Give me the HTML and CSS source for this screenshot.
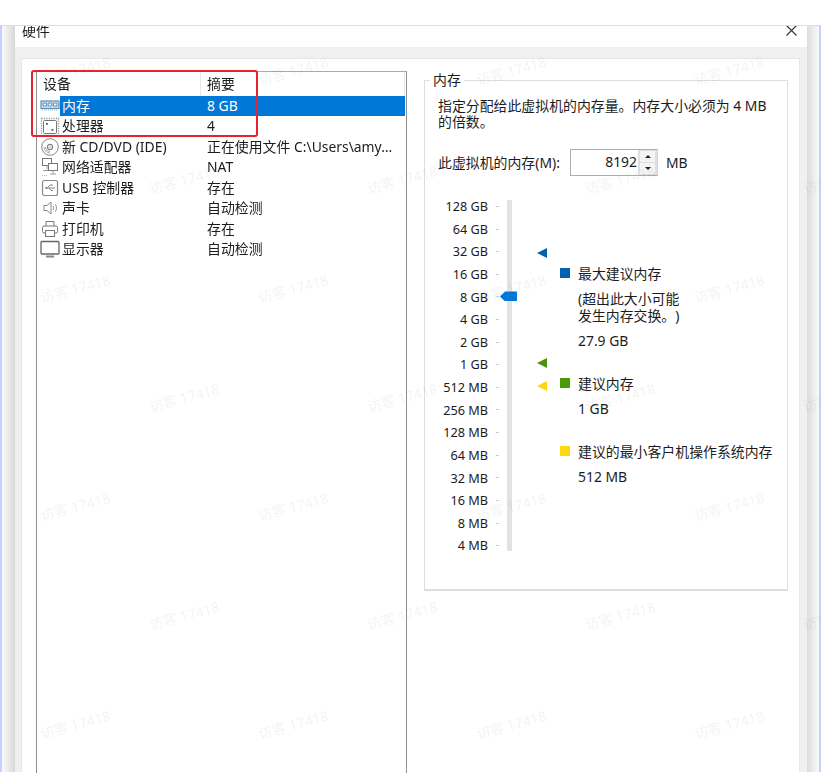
FILE: index.html
```html
<!DOCTYPE html>
<html lang="zh-CN">
<head>
<meta charset="utf-8">
<title>硬件</title>
<link rel="stylesheet" href="styles.css">
</head>
<body>
<div class="topbar"></div>
<div class="stage">
  <div class="edge edge-left"></div>
  <main class="window">
    <header class="titlebar">
      <span class="title">硬件</span>
      <svg class="close" viewBox="0 0 11 11" width="11" height="11"><path d="M.5.5l10 10M10.5.5l-10 10" stroke="#333" stroke-width="1.1" fill="none"/></svg>
    </header>
    <div class="band">
      <div class="panel">
        <section class="list">
          <div class="list-head">
            <div class="col-a">设备</div>
            <div class="col-b">摘要</div>
          </div>
          <div class="row sel">
            <svg class="ico" viewBox="0 0 20 20"><rect x="1" y="5" width="18" height="7.500" fill="#d3e3f0" stroke="#5d90b8" stroke-width="1.200"/><path d="M3 7h3.600v3H3zM8.200 7h3.600v3H8.200zM13.400 7h3.600v3h-3.600z" fill="#f6fbff" stroke="#4f86b0" stroke-width=".9"/><path d="M2 14h16" stroke="#8fb2cc" stroke-width="1.200" stroke-dasharray="1 1"/></svg>
            <div class="name">内存</div><div class="sum">8 GB</div>
          </div>
          <div class="row">
            <svg class="ico" viewBox="0 0 20 20"><rect x="1.500" y="1.500" width="17" height="17" fill="none" stroke="#999" stroke-width="1.400" stroke-dasharray="1.200 1.200"/><rect x="3.500" y="3.500" width="13" height="13" rx="1" fill="#fff" stroke="#777"/><rect x="6" y="6" width="1.800" height="1.800" fill="#555"/><rect x="11.500" y="12" width="1.800" height="1.800" fill="#555"/></svg>
            <div class="name">处理器</div><div class="sum">4</div>
          </div>
          <div class="row">
            <svg class="ico" viewBox="0 0 20 20"><circle cx="10" cy="10" r="8.300" fill="#fff" stroke="#888"/><circle cx="10" cy="10" r="2.800" fill="#ddd" stroke="#777"/><path d="M5.500 10a4.500 4.500 0 0 0 4.500 4.500M4 10a6 6 0 0 0 6 6" stroke="#aaa" fill="none"/></svg>
            <div class="name">新 CD/DVD (IDE)</div><div class="sum">正在使用文件 C:\Users\amy…</div>
          </div>
          <div class="row">
            <svg class="ico" viewBox="0 0 20 20"><rect x="2.500" y="1.500" width="9" height="7" fill="#fff" stroke="#777"/><rect x="8.500" y="6.500" width="9" height="7" fill="#fff" stroke="#777"/><path d="M7 8.500v4M3 13.500h5M13 13.500v3M10 17h6" stroke="#999" fill="none"/><path d="M2 18.500h6" stroke="#bbb" stroke-dasharray="1 1"/></svg>
            <div class="name">网络适配器</div><div class="sum">NAT</div>
          </div>
          <div class="row">
            <svg class="ico" viewBox="0 0 20 20"><rect x="2.500" y="2.500" width="15" height="15" rx="2" fill="#fff" stroke="#888" stroke-width="1.200"/><path d="M5 10h10M7 10l3-3h3M9 10l2 2.500h2" stroke="#888" fill="none"/><path d="M5 10l2-1.200v2.400z" fill="#888"/></svg>
            <div class="name">USB 控制器</div><div class="sum">存在</div>
          </div>
          <div class="row">
            <svg class="ico" viewBox="0 0 20 20"><path d="M4 7.500h3l4-3.500v12l-4-3.500H4z" fill="#fff" stroke="#888"/><path d="M13 8a3 3 0 0 1 0 4M15 6a6 6 0 0 1 0 8" stroke="#999" fill="none"/></svg>
            <div class="name">声卡</div><div class="sum">自动检测</div>
          </div>
          <div class="row">
            <svg class="ico" viewBox="0 0 20 20"><path d="M6 7V2.500h8V7" fill="#fff" stroke="#777"/><rect x="2.500" y="7" width="15" height="7" rx="1.500" fill="#fff" stroke="#777"/><rect x="5.500" y="11.500" width="9" height="6" fill="#fff" stroke="#777"/></svg>
            <div class="name">打印机</div><div class="sum">存在</div>
          </div>
          <div class="row">
            <svg class="ico" viewBox="0 0 20 20"><rect x="1" y="2.500" width="18" height="12.500" rx="1" fill="#fff" stroke="#666" stroke-width="1.300"/><path d="M6 17.500h8" stroke="#888" stroke-width="2"/></svg>
            <div class="name">显示器</div><div class="sum">自动检测</div>
          </div>
          <div class="callout"></div>
        </section>
        <fieldset class="group">
          <legend>内存</legend>
          <p class="desc">指定分配给此虚拟机的内存量。内存大小必须为 4 MB<br>的倍数。</p>
          <div class="mem-row">
            <span class="mem-label">此虚拟机的内存(M):</span>
            <div class="spin">
              <div class="spin-value">8192</div>
              <div class="spin-btns">
                <div class="spin-btn"><i class="arr-up"></i></div>
                <div class="spin-btn"><i class="arr-down"></i></div>
              </div>
            </div>
            <span class="mem-unit">MB</span>
          </div>
          <div class="scale">
            <div class="ticks">
              <div class="tick">128 GB</div>
              <div class="tick">64 GB</div>
              <div class="tick">32 GB</div>
              <div class="tick">16 GB</div>
              <div class="tick">8 GB</div>
              <div class="tick">4 GB</div>
              <div class="tick">2 GB</div>
              <div class="tick">1 GB</div>
              <div class="tick">512 MB</div>
              <div class="tick">256 MB</div>
              <div class="tick">128 MB</div>
              <div class="tick">64 MB</div>
              <div class="tick">32 MB</div>
              <div class="tick">16 MB</div>
              <div class="tick">8 MB</div>
              <div class="tick">4 MB</div>
            </div>
            <div class="track"></div>
            <div class="thumb"></div>
            <div class="tri tri-blue"></div>
            <div class="tri tri-green"></div>
            <div class="tri tri-yellow"></div>
            <div class="legend">
              <div class="lg">
                <div class="lg-title"><i class="sq sq-blue"></i>最大建议内存</div>
                <div class="lg-text">(超出此大小可能<br>发生内存交换。)</div>
                <div class="lg-text">27.9 GB</div>
              </div>
              <div class="lg">
                <div class="lg-title"><i class="sq sq-green"></i>建议内存</div>
                <div class="lg-text">1 GB</div>
              </div>
              <div class="lg">
                <div class="lg-title"><i class="sq sq-yellow"></i>建议的最小客户机操作系统内存</div>
                <div class="lg-text">512 MB</div>
              </div>
            </div>
          </div>
        </fieldset>
      </div>
    </div>
  </main>
  <div class="edge edge-right"></div>
</div>
<div class="wm-layer" aria-hidden="true">
  <div class="wm-row wm-a"><span>访客 17418</span><span>访客 17418</span><span>访客 17418</span><span>访客 17418</span></div>
  <div class="wm-row wm-b"><span>访客 17418</span><span>访客 17418</span><span>访客 17418</span><span>访客 17418</span></div>
  <div class="wm-row wm-a"><span>访客 17418</span><span>访客 17418</span><span>访客 17418</span><span>访客 17418</span></div>
  <div class="wm-row wm-b"><span>访客 17418</span><span>访客 17418</span><span>访客 17418</span><span>访客 17418</span></div>
  <div class="wm-row wm-a"><span>访客 17418</span><span>访客 17418</span><span>访客 17418</span><span>访客 17418</span></div>
  <div class="wm-row wm-b"><span>访客 17418</span><span>访客 17418</span><span>访客 17418</span><span>访客 17418</span></div>
  <div class="wm-row wm-a"><span>访客 17418</span><span>访客 17418</span><span>访客 17418</span><span>访客 17418</span></div>
</div>
</body>
</html>
```

FILE: styles.css
```css
* { box-sizing: border-box; }
html, body { margin: 0; height: 773px; overflow: hidden; background: #fff; }
body {
  position: relative;
  font-family: "Noto Sans", "Noto Sans CJK SC", sans-serif;
  font-size: 13.9px;
  color: #1c1c1c;
  text-spacing-trim: space-all;
}
.topbar {
  position: relative;
  z-index: 2;
  height: 26px;
  background: #fff;
  border-bottom: 1px solid #d9dde6;
}
.stage { display: flex; height: 747px; margin-top: -1px; filter: blur(.3px); }
.edge { width: 15px; flex: none; }
.edge-left { background: linear-gradient(to right, #c3d0ff 0, #c3d0ff 2px, #fbfbfb 2px, #d8d8d8 15px); }
.edge-right { width: 14px; background: linear-gradient(to right, #dcdcdc 0, #fafafa 12px, #c3d0ff 12px, #c3d0ff 14px); }
.window { width: 792px; flex: none; display: flex; flex-direction: column; background: #fff; }
.titlebar { height: 22px; flex: none; display: flex; align-items: flex-start; justify-content: space-between; padding: 0 10px 0 7px; }
.title { line-height: 18px; margin-top: -3px; }
.close { margin-top: 0; }
.band { flex: 1; background: #f0f0f0; padding: 11px 7px 0 6px; min-height: 0; }
.panel { height: 100%; background: #fff; border: 1px solid #e6e6e6; border-bottom: 0; padding: 11px 0 0 14px; display: flex; align-items: flex-start; }

.list { position: relative; width: 371px; height: 720px; margin-top: 1px; flex: none; border: 1px solid #8e8e8e; border-top-color: #a3abb8; }
.list-head { display: flex; height: 24px; line-height: 24px; }
.col-a { width: 164px; padding-left: 6px; border-right: 1px solid #e8e8e8; }
.col-b { flex: 1; padding-left: 6px; border-right: 1px solid #e8e8e8; margin-right: 1px; }
.row { display: grid; grid-template-columns: 23px 141px 1fr; height: 20.43px; line-height: 20.43px; margin-right: 1px; }
.ico { width: 20px; height: 20px; margin-left: 3px; align-self: center; }
.name { padding-left: 2px; white-space: nowrap; }
.sum { padding-left: 6px; white-space: nowrap; overflow: hidden; }
.sel .name, .sel .sum { background: #0078d7; color: #fff; }
.callout { position: absolute; left: -6px; top: -2px; width: 227px; height: 67px; border: 2px solid #e4232f; border-radius: 3px; }

.group { width: 364px; height: 521px; margin: 0 0 0 17px; padding: 0 13px; min-width: 0; border: 1px solid #dedede; border-bottom-width: 2px; flex: none; }
.group legend { margin-left: -8px; padding: 0 3px; line-height: 20px; }
.desc { margin: 8px 0 0; line-height: 15.500px; }
.mem-row { display: flex; align-items: center; height: 27px; margin-top: 19.500px; }
.mem-label { width: 132px; flex: none; }
.mem-unit { margin-left: 8px; }
.spin { display: flex; width: 88px; height: 27px; border: 1px solid #adadad; border-right-color: #d4d4d4; }
.spin-value { flex: 1; text-align: right; padding-right: 1px; line-height: 23px; }
.spin-btns { width: 19px; flex: none; background: #dfdfdf; padding: 1px 2px; display: flex; flex-direction: column; gap: 1px; }
.spin-btn { flex: 1; background: #f4f4f4; display: flex; align-items: center; justify-content: center; }
.arr-up { width: 0; height: 0; border: 3px solid transparent; border-top: 0; border-bottom: 3px solid #222; }
.arr-down { width: 0; height: 0; border: 3px solid transparent; border-bottom: 0; border-top: 3px solid #222; }

.scale { position: relative; display: flex; align-items: flex-start; margin-top: 19.700px; }
.ticks { width: 61px; flex: none; font-size: 12.700px; }
.tick { display: flex; justify-content: flex-end; align-items: center; height: 22.620px; line-height: 22.620px; white-space: nowrap; }
.tick::after { content: ""; width: 3px; height: 1px; margin-left: 8px; background: #c8c8c8; }
.track { width: 5px; height: 351px; margin: 5.300px 0 0 8px; flex: none; background: #e0e3e3; }
.thumb { position: absolute; left: 62px; top: 96.300px; width: 17px; height: 10px; background: #0078d7; clip-path: polygon(0 50%, 30% 0, 100% 0, 100% 100%, 30% 100%); }
.tri { position: absolute; left: 99px; width: 0; height: 0; border-style: solid; border-width: 5px 10px 5px 0; border-color: transparent; }
.tri-blue { top: 53.300px; border-right-color: #0063b1; }
.tri-green { top: 163.300px; border-right-color: #4b920c; }
.tri-yellow { top: 186.300px; border-right-color: #ffd60f; }
.legend { margin: 69.800px 0 0 48px; display: flex; flex-direction: column; gap: 26px; line-height: 17px; white-space: nowrap; }
.lg { display: flex; flex-direction: column; gap: 8px; padding-left: 18px; }
.lg-title { position: relative; }
.sq { position: absolute; left: -18px; top: 3px; width: 10px; height: 10px; }
.sq-blue { background: #0063b1; }
.sq-green { background: #4b9a05; }
.sq-yellow { background: #ffd90d; }

.wm-layer { position: absolute; left: 0; top: 15px; width: 100%; pointer-events: none; z-index: 1; overflow: hidden; height: 758px; }
.wm-row { display: flex; height: 109px; align-items: center; }
.wm-a { margin-left: -34px; }
.wm-b { margin-left: 75px; }
.wm-row span { width: 218px; flex: none; text-align: center; font-size: 14px; color: rgba(0, 0, 0, .05); transform: rotate(-15deg); }
```
